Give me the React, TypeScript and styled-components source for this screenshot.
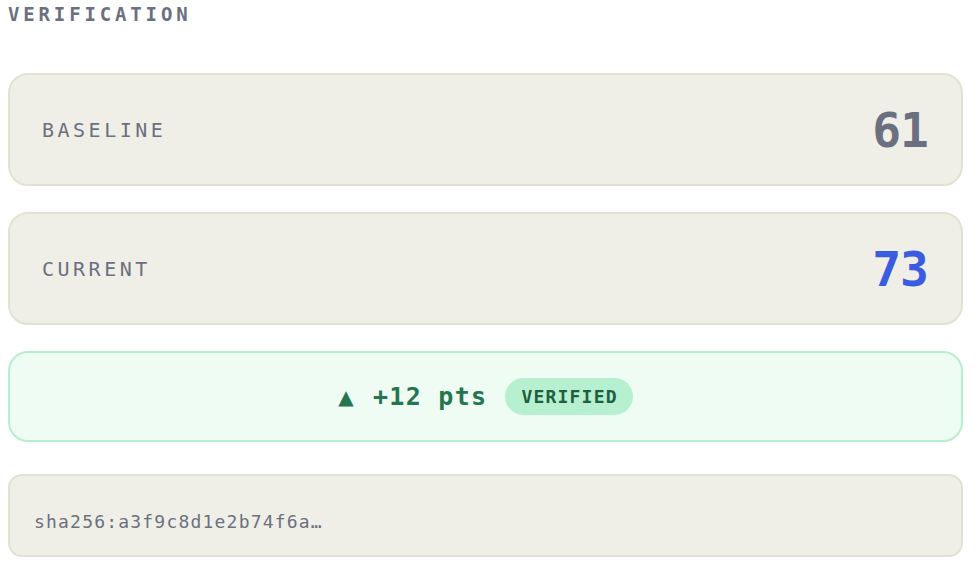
import React from "react";
import styled, { createGlobalStyle } from "styled-components";

const Global = createGlobalStyle`
  html, body { margin: 0; padding: 0; background: #ffffff; }
  body { font-family: "DejaVu Sans Mono", "Liberation Mono", monospace; }
`;

const Page = styled.div`
  width: 955px;
  padding: 0 15px 0 8px;
  display: flex;
  flex-direction: column;
`;

const Heading = styled.h2`
  margin: 0;
  font-size: 19px;
  line-height: 28px;
  font-weight: 700;
  letter-spacing: 3.85px;
  color: #6b7080;
  text-transform: uppercase;
  margin-bottom: 45px;
`;

const ScoreCard = styled.div<{ $gap?: number }>`
  box-sizing: border-box;
  height: 113px;
  display: flex;
  align-items: center;
  justify-content: space-between;
  padding: 0 33px 0 32px;
  background: #f0efe7;
  border: 2px solid #e2e2d3;
  border-radius: 20px;
  margin-bottom: ${(p) => p.$gap ?? 26}px;
`;

const Label = styled.span`
  font-size: 20px;
  letter-spacing: 3.5px;
  color: #6b7080;
`;

const Score = styled.span<{ $accent?: boolean }>`
  font-size: 48px;
  line-height: 1;
  font-weight: 700;
  letter-spacing: -1px;
  color: ${(p) => (p.$accent ? "#3a5ce0" : "#6b7080")};
`;

const DeltaCard = styled.div`
  box-sizing: border-box;
  height: 91px;
  display: flex;
  align-items: center;
  justify-content: center;
  gap: 18px;
  background: #effcf3;
  border: 2px solid #b5efcd;
  border-radius: 20px;
  margin-bottom: 32px;
`;

const Delta = styled.span`
  display: inline-flex;
  align-items: center;
  gap: 18px;
  font-size: 25px;
  font-weight: 700;
  letter-spacing: 1.3px;
  color: #247550;
`;

const Arrow = styled.span`
  font-family: "DejaVu Sans", sans-serif;
  font-size: 20px;
  line-height: 1;
  color: #247550;
`;

const Badge = styled.span`
  display: inline-flex;
  align-items: center;
  height: 37px;
  padding: 0 15px 0 16px;
  border-radius: 19px;
  background: #b6f0d0;
  color: #1e5f40;
  font-size: 18px;
  font-weight: 700;
  letter-spacing: 1.2px;
`;

const HashCard = styled.div`
  box-sizing: border-box;
  height: 83px;
  padding: 34px 24px 21px;
  background: #f0efe7;
  border: 2px solid #e2e2d3;
  border-radius: 14px;
`;

const Hash = styled.span`
  display: block;
  font-size: 18px;
  line-height: 24px;
  letter-spacing: 1.2px;
  color: #6b7080;
`;

export default function App() {
  return (
    <>
      <Global />
      <Page>
        <Heading>Verification</Heading>
        <ScoreCard>
          <Label>BASELINE</Label>
          <Score>61</Score>
        </ScoreCard>
        <ScoreCard>
          <Label>CURRENT</Label>
          <Score $accent>73</Score>
        </ScoreCard>
        <DeltaCard>
          <Delta>
            <Arrow>▲</Arrow>
            <span>+12 pts</span>
          </Delta>
          <Badge>VERIFIED</Badge>
        </DeltaCard>
        <HashCard>
          <Hash>sha256:a3f9c8d1e2b74f6a…</Hash>
        </HashCard>
      </Page>
    </>
  );
}
